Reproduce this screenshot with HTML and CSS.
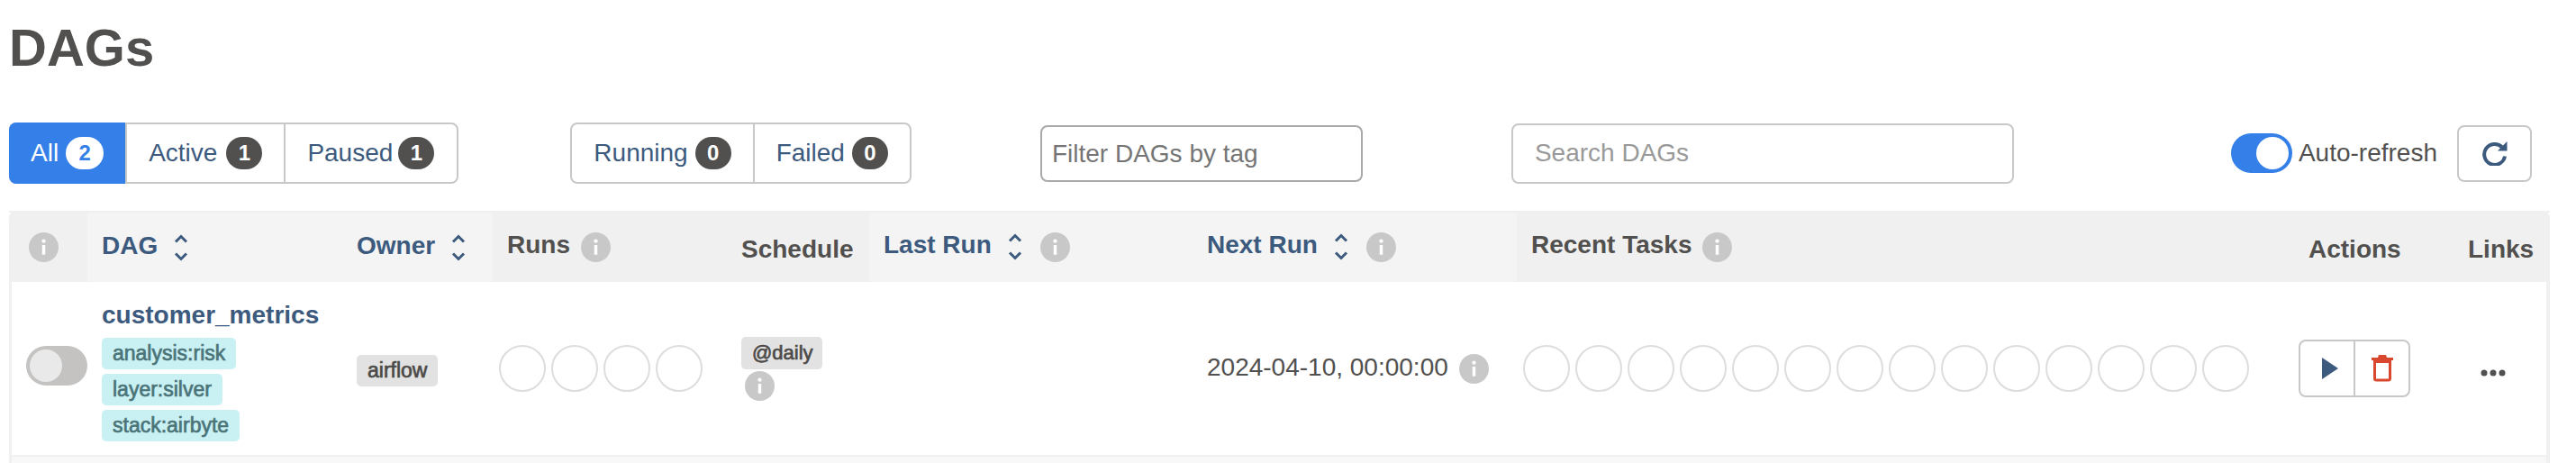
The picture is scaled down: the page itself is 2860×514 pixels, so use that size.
FILE: index.html
```html
<!DOCTYPE html>
<html lang="en">
<head>
    <meta charset="UTF-8">
    <meta name="viewport" content="width=device-width, initial-scale=1.0">
    <title>DAGs - Airflow</title>
    <link rel="stylesheet" href="styles.css">
</head>
<body>
    <svg class="icon-defs" width="0" height="0">
        <symbol id="info" viewBox="0 0 34 34">
            <circle cx="17" cy="17" r="17" fill="#c8c8c8"/>
            <circle cx="17" cy="10" r="2.2" fill="#fff"/>
            <rect x="15.2" y="14.5" width="3.6" height="11" fill="#fff"/>
        </symbol>
        <symbol id="sort" viewBox="0 0 16 30">
            <path d="M2 8.5l6-6 6 6M2 21.5l6 6 6-6" fill="none" stroke="#3c5a7e" stroke-width="3"/>
        </symbol>
    </svg>

    <h1 class="page-title">DAGs</h1>

    <div class="toolbar">
        <div class="btn-group status-group">
            <a class="btn btn-active">All <span class="count count-light">2</span></a>
            <a class="btn">Active <span class="count">1</span></a>
            <a class="btn">Paused <span class="count">1</span></a>
        </div>
        <div class="btn-group state-group">
            <a class="btn">Running <span class="count">0</span></a>
            <a class="btn">Failed <span class="count">0</span></a>
        </div>
        <div class="tag-filter">Filter DAGs by tag</div>
        <input class="search" type="text" placeholder="Search DAGs">
        <div class="refresh">
            <span class="switch switch-on"><span class="knob"></span></span>
            <span class="refresh-label">Auto-refresh</span>
            <button class="refresh-btn" type="button">
                <svg width="28" height="28" viewBox="0 0 28 28"><path d="M22 7.5A11.5 11.5 0 1 0 25 17.5" fill="none" stroke="#3c5a7e" stroke-width="4"/><path d="M27.5 1V11.5H17z" fill="#3c5a7e"/></svg>
            </button>
        </div>
    </div>

    <table class="dag-table">
        <colgroup>
            <col class="col-toggle"><col class="col-dag"><col class="col-owner"><col class="col-runs"><col class="col-schedule">
            <col class="col-last"><col class="col-next"><col class="col-tasks"><col class="col-actions"><col class="col-links">
        </colgroup>
        <thead>
            <tr>
                <th><svg class="info"><use href="#info"/></svg></th>
                <th class="sorted"><a>DAG</a><svg class="sort"><use href="#sort"/></svg></th>
                <th class="sorted"><a>Owner</a><svg class="sort"><use href="#sort"/></svg></th>
                <th>Runs<svg class="info"><use href="#info"/></svg></th>
                <th class="low">Schedule</th>
                <th class="sorted"><a>Last Run</a><svg class="sort"><use href="#sort"/></svg><svg class="info"><use href="#info"/></svg></th>
                <th class="sorted"><a>Next Run</a><svg class="sort"><use href="#sort"/></svg><svg class="info"><use href="#info"/></svg></th>
                <th>Recent Tasks<svg class="info"><use href="#info"/></svg></th>
                <th class="low">Actions</th>
                <th class="low">Links</th>
            </tr>
        </thead>
        <tbody>
            <tr class="dag-row">
                <td><span class="switch"><span class="knob"></span></span></td>
                <td class="dag-cell">
                    <a class="dag-name">customer_metrics</a>
                    <div class="tags">
                        <span class="tag">analysis:risk</span>
                        <span class="tag">layer:silver</span>
                        <span class="tag">stack:airbyte</span>
                    </div>
                </td>
                <td class="owner-cell"><span class="tag tag-grey">airflow</span></td>
                <td><div class="circles" id="runs"></div></td>
                <td>
                    <span class="tag tag-grey tag-schedule">@daily</span>
                    <svg class="info info-block"><use href="#info"/></svg>
                </td>
                <td></td>
                <td><div class="next-run">2024-04-10, 00:00:00<svg class="info"><use href="#info"/></svg></div></td>
                <td><div class="circles" id="tasks"></div></td>
                <td class="actions-cell">
                    <div class="action-group">
                        <button class="action-btn" type="button">
                            <svg class="play" width="18" height="24" viewBox="0 0 18 24"><path d="M0 0l18 12L0 24z" fill="#3c5a7e"/></svg>
                        </button>
                        <button class="action-btn" type="button">
                            <svg width="24" height="30" viewBox="0 0 24 30"><path d="M0 3h7l1-3h8l1 3h7v3H0z" fill="#d9472e"/><path d="M3.5 7.5h17V26a2 2 0 0 1-2 2h-13a2 2 0 0 1-2-2z" fill="none" stroke="#d9472e" stroke-width="3"/></svg>
                        </button>
                    </div>
                </td>
                <td>
                    <svg class="dots" width="28" height="8" viewBox="0 0 28 8"><circle cx="4" cy="4" r="3.5"/><circle cx="14" cy="4" r="3.5"/><circle cx="24" cy="4" r="3.5"/></svg>
                </td>
            </tr>
            <tr class="next-row"><td colspan="10"></td></tr>
        </tbody>
    </table>
    <script>
        // empty status circles
        function addCircles(id, count) {
            const box = document.getElementById(id);
            for (let i = 0; i < count; i++) {
                const circle = document.createElement("span");
                circle.className = "circle";
                box.appendChild(circle);
            }
        }

        addCircles("runs", 4);
        addCircles("tasks", 14);
    </script>
</body>
</html>
```

FILE: styles.css
```css
html, body {
    height: 514px;
    overflow: hidden;
}
body {
    margin: 0;
    padding: 0 29px 0 10px;
    background-color: #fff;
    font-family: "Liberation Sans", Arial, sans-serif;
    font-size: 28px;
    color: #51504f;
}
.icon-defs {
    position: absolute;
}
.page-title {
    margin: 0;
    padding-top: 22px;
    height: 136px;
    box-sizing: border-box;
    font-size: 58px;
    line-height: 62px;
    font-weight: bold;
}

/* toolbar */
.toolbar {
    display: flex;
    align-items: center;
    height: 68px;
    margin-bottom: 30px;
    padding-right: 20px;
}
.btn-group {
    display: flex;
    height: 68px;
    box-sizing: border-box;
    border: 2px solid #c8c8c8;
    border-radius: 8px;
}
.state-group {
    margin-left: 124px;
}
.btn {
    display: flex;
    align-items: center;
    gap: 8px;
    padding: 0 24px;
    color: #3c5a7e;
    border-left: 2px solid #c8c8c8;
}
.btn:first-child {
    border-left: 0;
}
.status-group .btn:nth-child(2) {
    gap: 10px;
}
.status-group .btn:last-child {
    gap: 6px;
    padding-right: 25px;
}
.btn-active {
    margin: -2px 0 -2px -2px;
    padding: 0 24px;
    background-color: #357fe8;
    color: #fff;
    border-radius: 8px 0 0 8px;
}
.count {
    min-width: 40px;
    height: 36px;
    box-sizing: border-box;
    border-radius: 18px;
    background-color: #51504f;
    color: #fff;
    font-size: 24px;
    font-weight: bold;
    line-height: 36px;
    text-align: center;
}
.count-light {
    min-width: 42px;
    background-color: #fff;
    color: #357fe8;
}
.tag-filter {
    width: 358px;
    height: 63px;
    margin-left: 143px;
    box-sizing: border-box;
    padding-left: 11px;
    border: 2px solid #a9a9a9;
    border-radius: 8px;
    color: #757575;
    line-height: 59px;
}
.search {
    width: 558px;
    height: 67px;
    margin-left: 165px;
    box-sizing: border-box;
    padding: 0 24px;
    border: 2px solid #c8c8c8;
    border-radius: 8px;
    font-family: inherit;
    font-size: 28px;
    color: #51504f;
}
.search::placeholder {
    color: #999;
}
.refresh {
    display: flex;
    align-items: center;
    margin-left: auto;
}
.switch {
    display: inline-block;
    width: 68px;
    height: 44px;
    box-sizing: border-box;
    padding: 4px;
    border-radius: 22px;
    background-color: #c4c3c1;
}
.knob {
    display: block;
    width: 36px;
    height: 36px;
    border-radius: 50%;
    background-color: #e9e9e9;
}
.switch-on {
    background-color: #357fe8;
}
.switch-on .knob {
    margin-left: 24px;
    background-color: #fff;
}
.refresh-label {
    margin-left: 7px;
}
.refresh-btn {
    display: flex;
    align-items: center;
    justify-content: center;
    width: 83px;
    height: 63px;
    margin-left: 22px;
    padding: 0;
    border: 2px solid #c8c8c8;
    border-radius: 8px;
    background-color: #fff;
}

/* table */
.dag-table {
    width: 2821px;
    table-layout: fixed;
    border-collapse: separate;
    border-spacing: 0;
    background-color: #f0f0f0;
    border-radius: 8px 8px 0 0;
}
.col-toggle { width: 87px; }
.col-dag { width: 283px; }
.col-owner { width: 167px; }
.col-runs { width: 260px; }
.col-schedule { width: 158px; }
.col-last { width: 359px; }
.col-next { width: 360px; }
.col-tasks { width: 863px; }
.col-actions { width: 177px; }
.col-links { width: 107px; }

th {
    height: 79px;
    box-sizing: border-box;
    padding: 0 0 2px 16px;
    border-top: 2px solid #f0f0f0;
    font-weight: bold;
    text-align: left;
    white-space: nowrap;
    vertical-align: middle;
}
th:first-child {
    padding-left: 22px;
}
th a {
    color: #3c5a7e;
}
th.sorted {
    background-color: #f4f4f4;
}
th.low {
    padding-top: 4px;
    padding-bottom: 0;
}
.info {
    width: 33px;
    height: 33px;
    margin-left: 12px;
    vertical-align: middle;
}
th:first-child .info {
    margin-left: 0;
}
.sort {
    width: 16px;
    height: 30px;
    margin-left: 18px;
    vertical-align: middle;
}
.sort + .info {
    margin-left: 20px;
}

.dag-row td {
    height: 192px;
    box-sizing: border-box;
    padding: 0 0 0 16px;
    background-color: #fff;
    vertical-align: middle;
}
.dag-row td:first-child {
    padding-left: 16px;
    border-left: 3px solid #f0f0f0;
}
.dag-row td.dag-cell {
    padding-top: 4px;
}
.dag-row td.owner-cell {
    padding-top: 5px;
}
.dag-row td.actions-cell {
    padding-left: 5px;
}
.dag-row td:last-child {
    padding-left: 30px;
    border-right: 4px solid #f0f0f0;
}
.next-row td {
    height: 9px;
    box-sizing: border-box;
    padding: 0;
    border-top: 2px solid #f0f0f0;
    border-left: 3px solid #f0f0f0;
    border-right: 4px solid #f0f0f0;
    background-color: #f8f8f8;
}
.dag-name {
    display: block;
    line-height: 36px;
    color: #3c5a7e;
    font-weight: bold;
}
.tags {
    display: flex;
    flex-direction: column;
    align-items: flex-start;
    gap: 5px;
    margin-top: 7px;
}
.tag {
    display: inline-block;
    height: 35px;
    padding: 0 12px;
    border-radius: 5px;
    background-color: #c9f1f4;
    color: #4b7478;
    font-size: 23px;
    -webkit-text-stroke: 0.7px currentColor;
    line-height: 35px;
}
.tag-grey {
    background-color: #e2e2e2;
    color: #4c4a48;
}
.tag-schedule {
    height: 36px;
    padding: 0 10px 0 12px;
    font-size: 22px;
    line-height: 36px;
}
.info-block {
    display: block;
    margin: 2px 0 0 4px;
}
.circles {
    display: flex;
    gap: 6px;
    margin-left: -9px;
}
.circle {
    width: 52px;
    height: 52px;
    flex: none;
    box-sizing: border-box;
    border: 2px solid #ddd;
    border-radius: 50%;
}
.next-run {
    white-space: nowrap;
}
.action-group {
    display: flex;
    width: 124px;
    height: 64px;
    box-sizing: border-box;
    border: 2px solid #c8c8c8;
    border-radius: 8px;
}
.action-btn {
    display: flex;
    align-items: center;
    justify-content: center;
    flex: 1;
    padding: 0;
    border: 0;
    background: none;
}
.action-btn + .action-btn {
    border-left: 2px solid #c8c8c8;
}
.play {
    margin-left: 6px;
}
.dots {
    fill: #51504f;
}
```
